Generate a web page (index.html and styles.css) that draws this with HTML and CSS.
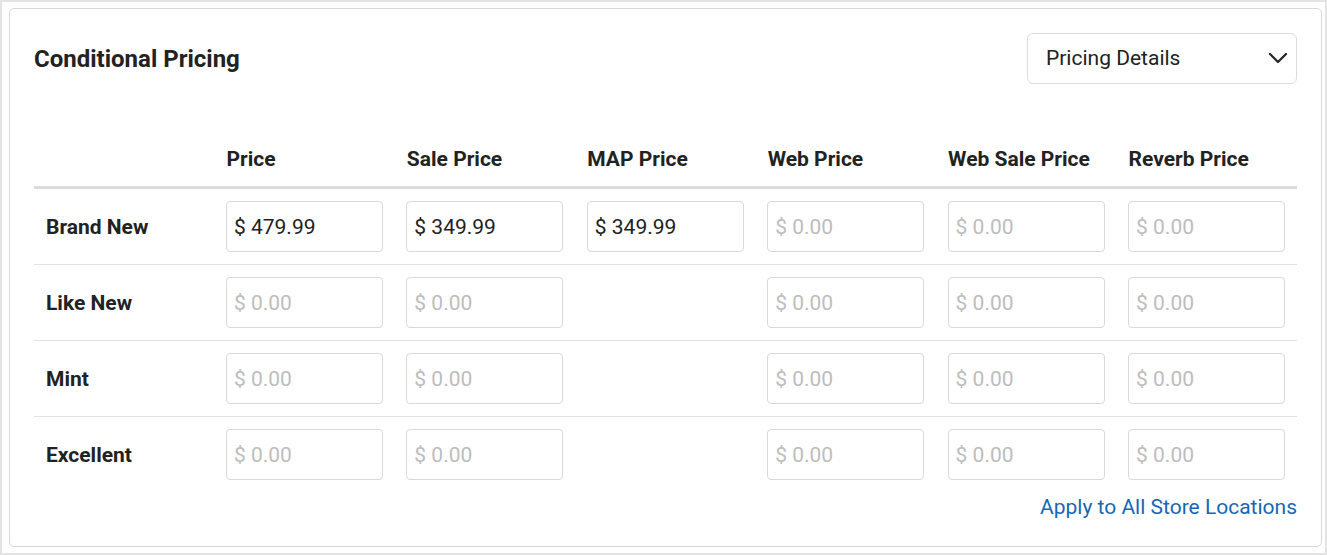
FILE: index.html
```html
<!DOCTYPE html>
<html>
<head>
<meta charset="utf-8">
<link rel="stylesheet" href="styles.css">
</head>
<body>
<div class="frame">
  <section class="card">
    <header class="card-head">
      <h2 class="title">Conditional Pricing</h2>
      <div class="select">
        <span>Pricing Details</span>
        <svg class="chev" width="20" height="12" viewBox="0 0 20 12"><path d="M2 2 L10 10 L18 2" fill="none" stroke="#222" stroke-width="2.2" stroke-linecap="round" stroke-linejoin="round"/></svg>
      </div>
    </header>
    <table class="grid">
      <thead>
        <tr>
          <th></th>
          <th>Price</th>
          <th>Sale Price</th>
          <th>MAP Price</th>
          <th>Web Price</th>
          <th>Web Sale Price</th>
          <th>Reverb Price</th>
        </tr>
      </thead>
      <tbody>
        <tr>
          <td class="label">Brand New</td>
          <td><div class="inp val">$ 479.99</div></td>
          <td><div class="inp val">$ 349.99</div></td>
          <td><div class="inp val">$ 349.99</div></td>
          <td><div class="inp ph">$ 0.00</div></td>
          <td><div class="inp ph">$ 0.00</div></td>
          <td><div class="inp ph">$ 0.00</div></td>
        </tr>
        <tr>
          <td class="label">Like New</td>
          <td><div class="inp ph">$ 0.00</div></td>
          <td><div class="inp ph">$ 0.00</div></td>
          <td></td>
          <td><div class="inp ph">$ 0.00</div></td>
          <td><div class="inp ph">$ 0.00</div></td>
          <td><div class="inp ph">$ 0.00</div></td>
        </tr>
        <tr>
          <td class="label">Mint</td>
          <td><div class="inp ph">$ 0.00</div></td>
          <td><div class="inp ph">$ 0.00</div></td>
          <td></td>
          <td><div class="inp ph">$ 0.00</div></td>
          <td><div class="inp ph">$ 0.00</div></td>
          <td><div class="inp ph">$ 0.00</div></td>
        </tr>
        <tr>
          <td class="label">Excellent</td>
          <td><div class="inp ph">$ 0.00</div></td>
          <td><div class="inp ph">$ 0.00</div></td>
          <td></td>
          <td><div class="inp ph">$ 0.00</div></td>
          <td><div class="inp ph">$ 0.00</div></td>
          <td><div class="inp ph">$ 0.00</div></td>
        </tr>
      </tbody>
    </table>
    <div class="foot"><a class="link" href="#">Apply to All Store Locations</a></div>
  </section>
</div>
</body>
</html>
```
FILE: styles.css
```css
html, body {
  margin: 0;
  padding: 0;
  background: #fff;
}
body {
  font-family: Roboto, "Liberation Sans", Arial, sans-serif;
  color: #212121;
}
.frame {
  box-sizing: border-box;
  width: 1327px;
  height: 555px;
  border: 2px solid #e4e4e4;
  padding: 6px 3px 6px 7px;
}
.card {
  box-sizing: border-box;
  height: 539px;
  border: 1px solid #d8d8d8;
  border-radius: 5px;
  padding: 24px 24px 24px 24px;
}
.card-head {
  display: flex;
  align-items: center;
  justify-content: space-between;
  height: 50px;
}
.title {
  margin: 0;
  padding-top: 2px;
  font-size: 24px;
  font-weight: 700;
  color: #222;
}
.select {
  box-sizing: border-box;
  width: 270px;
  height: 51px;
  border: 1px solid #dcdcdc;
  border-radius: 6px;
  display: flex;
  align-items: center;
  justify-content: space-between;
  padding: 0 8px 0 18px;
  font-size: 21px;
  color: #222;
}
.chev {
  display: block;
}
.grid {
  width: 100%;
  margin-top: 51px;
  border-collapse: collapse;
  table-layout: fixed;
}
.grid th {
  text-align: left;
  font-size: 21px;
  font-weight: 700;
  line-height: 24px;
  color: #222;
  padding: 13px 12px 15px;
  border-bottom: 3px solid #dcdcdc;
}
.grid td {
  padding: 12px 12px 12px 11.5px;
  vertical-align: middle;
  border-bottom: 1px solid #e2e2e2;
}
.grid td.label {
  padding-left: 12px;
  font-size: 21px;
  font-weight: 700;
  color: #222;
}
.grid tbody tr:last-child td {
  border-bottom: none;
}
.inp {
  box-sizing: border-box;
  height: 51px;
  border: 1px solid #d9d9d9;
  border-radius: 4px;
  padding: 0 7px;
  display: flex;
  align-items: center;
  font-size: 21px;
}
.inp.val {
  color: #222;
}
.inp.ph {
  color: #bdbdbd;
}
.foot {
  display: flex;
  justify-content: flex-end;
  margin-top: 3px;
}
.link {
  font-size: 21px;
  line-height: 24px;
  color: #1767b5;
  text-decoration: none;
}
```
